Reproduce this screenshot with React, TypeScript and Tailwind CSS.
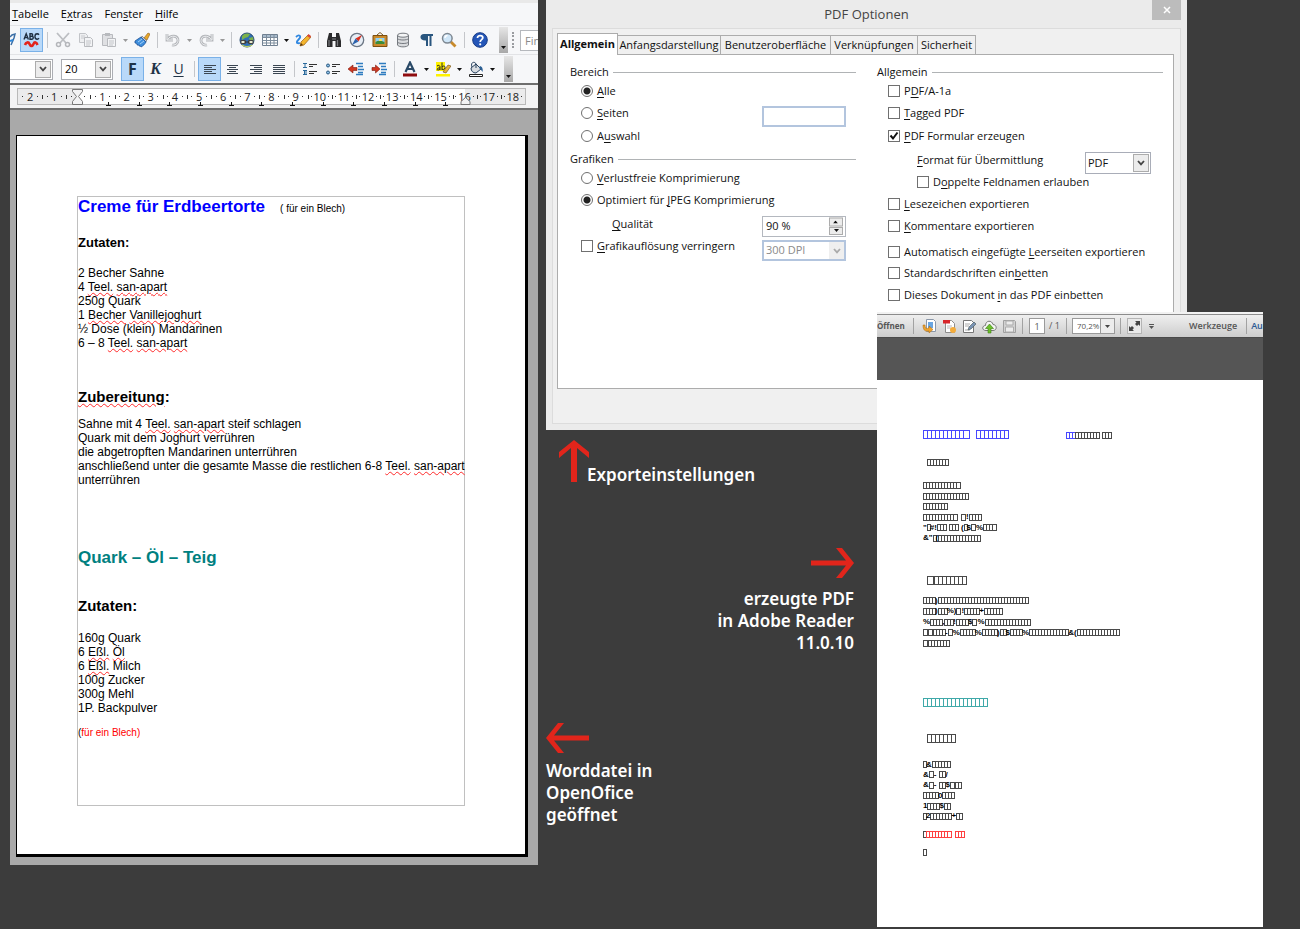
import type { ReactNode } from "react";
import clsx from "clsx";

/* ---------- shared bits ---------- */

// U marks the access key letter
function U({ children }: { children: ReactNode }) {
  return <span className="underline underline-offset-2">{children}</span>;
}

function Spell({ children }: { children: ReactNode }) {
  return (
    <span className="underline decoration-[#ff2a2a] decoration-wavy decoration-1 underline-offset-1">
      {children}
    </span>
  );
}

function Chevron({ color = "#444" }: { color?: string }) {
  return (
    <svg width="8" height="6" viewBox="0 0 8 6" fill="none" stroke={color} strokeWidth="1.800">
      <path d="M1 1l3 3.400L7 1" />
    </svg>
  );
}

function Caret({ color = "#111" }: { color?: string }) {
  return (
    <svg width="5" height="3" viewBox="0 0 5 3" fill={color}>
      <path d="M0 0h5L2.500 3z" />
    </svg>
  );
}

/* ---------- writer window ---------- */

function Sep() {
  return (
    <span className="flex w-2 shrink-0 justify-center">
      <span className="h-4 w-px bg-[#c4c6ca]" />
    </span>
  );
}

function Tool({ label, active, children }: { label: string; active?: boolean; children: ReactNode }) {
  return (
    <button
      type="button"
      aria-label={label}
      className={clsx(
        "flex h-6 w-[23px] shrink-0 items-center justify-center border",
        active ? "border-[#7ab1e8] bg-[#b9d9f9]" : "border-transparent",
      )}
    >
      {children}
    </button>
  );
}

function Drop({ label, muted }: { label: string; muted?: boolean }) {
  return (
    <button type="button" aria-label={label} className="flex h-6 w-2.5 shrink-0 items-center justify-center">
      <Caret color={muted ? "#999" : "#111"} />
    </button>
  );
}

function Overflow({ label }: { label: string }) {
  return (
    <button
      type="button"
      aria-label={label}
      className="flex h-[26px] w-[9px] shrink-0 items-end justify-center bg-linear-to-b from-[#e6e6e6] to-[#a8a8a8] pb-1"
    >
      <Caret />
    </button>
  );
}

function Icon({ children }: { children: ReactNode }) {
  return (
    <svg width="16" height="16" viewBox="0 0 16 16" fill="none" className="shrink-0">
      {children}
    </svg>
  );
}

function AlignIcon({ d }: { d: string }) {
  return (
    <Icon>
      <path d={d} stroke="#3b4652" strokeWidth="1" />
    </Icon>
  );
}

function StandardBar() {
  return (
    <div className="flex h-[29px] items-center overflow-hidden border-t border-[#e2e3e6]">
      <span className="w-2.5 shrink-0">
        <svg width="6" height="16" viewBox="0 0 6 16" fill="none">
          <path d="M0 5l2-2 3-1-1 4-3 7" stroke="#3b6ea5" strokeWidth="1.500" />
          <path d="M0 9l3-1" stroke="#2b85d8" strokeWidth="2" />
        </svg>
      </span>
      <Tool label="Automatische Rechtschreibprüfung" active>
        <svg width="17" height="16" viewBox="0 0 17 16" fill="none">
          <g stroke="#1f2f42" strokeWidth="1.400">
            <path d="M1 7.500L3.200 1.800 5.400 7.500M2 5.600h2.600" />
            <path d="M7 1.800v5.400h1.800a1.500 1.500 0 000-3H7h1.500a1.200 1.200 0 000-2.400z" />
            <path d="M16 2.700a2.400 2.400 0 00-1.800-.9c-3 0-3 5.400 0 5.400.8 0 1.400-.4 1.800-.9" />
          </g>
          <path d="M2 13c1-3 3.500-3.500 4.500-1s3 2.500 4 0 3-2 4 1" stroke="#e3231b" strokeWidth="2.600" />
        </svg>
      </Tool>
      <Sep />
      <Tool label="Ausschneiden">
        <Icon>
          <path d="M2 1l9 10M14 1L5 11" stroke="#bcbec2" strokeWidth="1.800" />
          <circle cx="3.500" cy="12.500" r="2" stroke="#b4b6ba" strokeWidth="1.500" />
          <circle cx="12.500" cy="12.500" r="2" stroke="#b4b6ba" strokeWidth="1.500" />
        </Icon>
      </Tool>
      <Tool label="Kopieren">
        <Icon>
          <path d="M1.500 1.500h6l2 2v7h-8z" fill="#eeeff1" stroke="#c2c4c8" />
          <path d="M3 4h4M3 6h4" stroke="#c8cace" />
          <path d="M6.500 5.500h6l2 2v7h-8z" fill="#f3f4f6" stroke="#b8babe" />
          <path d="M8 9h5M8 11h5M8 13h4" stroke="#c2c4c8" />
        </Icon>
      </Tool>
      <Tool label="Einfügen">
        <Icon>
          <path d="M1.500 2.500h10v11h-10z" fill="#dfe0e3" stroke="#b8babe" />
          <path d="M4 1h5v3H4z" fill="#b8babe" />
          <path d="M6.500 6.500h8v8h-8z" fill="#f3f4f6" stroke="#b8babe" />
          <path d="M8 9h5M8 11h5M8 13h4" stroke="#c2c4c8" />
        </Icon>
      </Tool>
      <Drop label="Einfügen Optionen" muted />
      <Tool label="Format übertragen">
        <Icon>
          <path d="M10 6l4-5 2 1-3 6z" fill="#e9a92c" stroke="#8b5a16" strokeWidth=".6" />
          <path d="M8 4l5 5-2 1-4-4z" fill="#c9ced6" stroke="#5a6470" strokeWidth=".6" />
          <path d="M1 9c2-1 4-3 6-4l5 5c-1 2-3 4-5 5-1-1 0-1-2-1 0-1 0-1-2-1 0-1 0-2-2-2z" fill="#3f8fdd" stroke="#1c4f94" strokeWidth=".8" />
          <path d="M4 10l4-3M6 12l4-3" stroke="#a6d0f7" />
        </Icon>
      </Tool>
      <Sep />
      <Tool label="Rückgängig">
        <Icon>
          <path d="M2 2v6h6M2.500 7.500C6 2.500 13 3.500 13 8.500c0 3.500-3.500 5-6 4.500" stroke="#b4b6ba" strokeWidth="2.800" />
          <path d="M2 2v6h6M2.500 7.500C6 2.500 13 3.500 13 8.500c0 3.500-3.500 5-6 4.500" stroke="#eceef0" strokeWidth="1" />
        </Icon>
      </Tool>
      <Drop label="Rückgängig Liste" muted />
      <Tool label="Wiederherstellen">
        <Icon>
          <path d="M14 2v6H8M13.500 7.500C10 2.500 3 3.500 3 8.500c0 3.500 3.500 5 6 4.500" stroke="#b4b6ba" strokeWidth="2.800" />
          <path d="M14 2v6H8M13.500 7.500C10 2.500 3 3.500 3 8.500c0 3.500 3.500 5 6 4.500" stroke="#eceef0" strokeWidth="1" />
        </Icon>
      </Tool>
      <Drop label="Wiederherstellen Liste" muted />
      <Sep />
      <Tool label="Hyperlink">
        <Icon>
          <circle cx="8" cy="8" r="7" fill="#2f6fb5" stroke="#274a70" />
          <path d="M3 4c2-3 6-3 8-2l-2 3-3 1-3 2zM10 6l4-1 .5 4-3 1z" fill="#7cb24a" />
          <path d="M2 8.500h4.500v3H2zM9.500 8.500H14v3H9.500z" fill="#e8ead0" stroke="#444" />
          <path d="M5 10h6" stroke="#333" />
          <path d="M3 13c3 2 7 2 10 0" stroke="#bcd06a" strokeWidth="1.500" />
        </Icon>
      </Tool>
      <Tool label="Tabelle">
        <Icon>
          <path d="M.5 2.500h15v11H.5z" fill="#fff" stroke="#6f7f90" />
          <path d="M1 3h14v2H1z" fill="#a9bccd" />
          <path d="M.5 5.500h15M.5 8.500h15M.5 11h15M4.500 2.500v11M8.500 2.500v11M12 2.500v11" stroke="#7c8c9c" />
        </Icon>
      </Tool>
      <Drop label="Tabelle Größe" />
      <Tool label="Zeichenfunktionen">
        <Icon>
          <path d="M1 5c3-3 6-1 3 2s-3 5 1 4" stroke="#2f87e0" strokeWidth="1.800" />
          <path d="M5 14l1-4 7-7 3 2-7 8z" fill="#f3b52e" stroke="#9b5f12" strokeWidth=".7" />
          <path d="M12 4l1.500-2L16 4l-1 2z" fill="#d8463a" />
          <path d="M5 14l1-3 2 2z" fill="#5a3a12" />
        </Icon>
      </Tool>
      <Sep />
      <Tool label="Suchen und Ersetzen">
        <Icon>
          <path d="M3 1h3v4h4V1h3l2 8v6H9.500V9h-3v6H1V9z" fill="#2b2b2d" />
          <path d="M3 8v6M11.500 8v6" stroke="#77797d" strokeWidth="1.200" />
          <path d="M6 6h4v2H6z" fill="#55575b" />
        </Icon>
      </Tool>
      <Tool label="Navigator">
        <Icon>
          <circle cx="8" cy="8" r="6.700" fill="#e7eef6" stroke="#6b7684" strokeWidth="1.300" />
          <path d="M13 3L9.500 9.500l-3-3z" fill="#d9301f" />
          <path d="M3 13l3.500-6.500 3 3z" fill="#2b63ad" />
        </Icon>
      </Tool>
      <Tool label="Galerie">
        <Icon>
          <path d="M5 3l3-2.500L11 3" stroke="#7b5a23" />
          <path d="M1 3.500h14v11H1z" fill="#c98a2b" stroke="#7d4f10" />
          <path d="M3.500 6h9v6h-9z" fill="#8ed0f5" />
          <path d="M3.500 10c3-2 6-1 9 0v2h-9z" fill="#3d8b37" />
          <path d="M7 7h3v2H7z" fill="#f6e36a" />
        </Icon>
      </Tool>
      <Tool label="Datenquellen">
        <Icon>
          <path d="M2.500 3v10c1 2.500 10 2.500 11 0V3" fill="#d9dbde" stroke="#75797f" />
          <ellipse cx="8" cy="3.200" rx="5.500" ry="2" fill="#f4f5f6" stroke="#75797f" />
          <path d="M2.500 6.500c1 2 10 2 11 0M2.500 10c1 2 10 2 11 0" stroke="#75797f" />
        </Icon>
      </Tool>
      <Tool label="Steuerzeichen">
        <Icon>
          <path d="M8 8.500C1 9 1 2 6 2h9v2h-1.500v10h-2V4H10v10H8z" fill="#29567f" />
        </Icon>
      </Tool>
      <Tool label="Maßstab">
        <Icon>
          <path d="M9.500 9.500l5 5" stroke="#c78a2c" strokeWidth="2.800" />
          <circle cx="6.300" cy="6.300" r="4.800" fill="#cfe6f8" stroke="#7d8791" strokeWidth="1.500" />
          <path d="M4 6c0-1.500 1-2.500 2.500-2.500" stroke="#fff" strokeWidth="1.300" />
        </Icon>
      </Tool>
      <Sep />
      <Tool label="Hilfe">
        <Icon>
          <circle cx="8" cy="8" r="7.300" fill="#2456b8" stroke="#163a86" />
          <path d="M5.500 6c0-3.500 5.300-3 5.300-.2C10.800 7.800 8.200 7.500 8.200 10" stroke="#fff" strokeWidth="1.800" />
          <circle cx="8.200" cy="12.300" r="1.100" fill="#fff" />
        </Icon>
      </Tool>
      <span className="w-2 shrink-0" />
      <Overflow label="Weitere Symbole Standard" />
      <span className="mx-1 h-4 shrink-0 border-l-2 border-dotted border-[#9a9ca0]" />
      <input
        aria-label="Suchtext"
        placeholder="Find"
        className="ml-0.5 h-[21px] w-[60px] shrink-0 border border-[#b5b8bd] bg-white pl-1 text-[11px] placeholder:text-[#8a8a8a]"
      />
    </div>
  );
}

function Combo({ label, value, className }: { label: string; value: string; className: string }) {
  return (
    <label className={clsx("relative flex h-[21px] shrink-0 border border-[#abadb3] bg-white", className)}>
      <select aria-label={label} className="w-full appearance-none bg-transparent pl-[3px] text-[11px] outline-none">
        <option>{value}</option>
      </select>
      <span className="pointer-events-none absolute inset-y-px right-px flex w-4 items-center justify-center border border-[#acacac] bg-[#ececec]">
        <Chevron />
      </span>
    </label>
  );
}

function FormatBar() {
  return (
    <div className="flex h-[29px] items-center overflow-hidden border-t border-[#e2e3e6]">
      <Combo label="Schriftname" value="" className="w-[43px] border-l-0" />
      <Combo label="Schriftgröße" value="20" className="mx-2 w-[52px]" />
      <Tool label="Fett" active>
        <b className="font-['Open_Sans'] text-base leading-none text-[#1f3347]">F</b>
      </Tool>
      <Tool label="Kursiv">
        <b className="font-['Liberation_Serif'] text-base leading-none text-[#1f3347] italic">K</b>
      </Tool>
      <Tool label="Unterstrichen">
        <span className="font-['Open_Sans'] text-sm leading-none text-[#1f3347] underline underline-offset-2">U</span>
      </Tool>
      <Sep />
      <Tool label="Linksbündig" active>
        <AlignIcon d="M2 4.500h12M2 6.500h8M2 8.500h12M2 10.500h8M2 12.500h12" />
      </Tool>
      <Tool label="Zentriert">
        <AlignIcon d="M2 4.500h11M4 6.500h7M2 8.500h11M4 10.500h7M2 12.500h11" />
      </Tool>
      <Tool label="Rechtsbündig">
        <AlignIcon d="M2 4.500h12M6 6.500h8M2 8.500h12M6 10.500h8M2 12.500h12" />
      </Tool>
      <Tool label="Blocksatz">
        <AlignIcon d="M2 4.500h12M2 6.500h12M2 8.500h12M2 10.500h12M2 12.500h12" />
      </Tool>
      <Sep />
      <Tool label="Nummerierung">
        <Icon>
          <path d="M1 2.500h4M3 2.500v4M1 6.500h4M1 9.500h4M2.500 9.500v4M4 9.500v4M1 13.500h4" stroke="#2b6a9c" />
          <path d="M7 3.500h8M7 5.500h4M7 10.500h8M7 12.500h5" stroke="#333" />
        </Icon>
      </Tool>
      <Tool label="Aufzählung">
        <Icon>
          <circle cx="3" cy="4.500" r="1.500" fill="#8cc0e8" stroke="#27577f" />
          <circle cx="3" cy="11.500" r="1.500" fill="#8cc0e8" stroke="#27577f" />
          <path d="M7 3.500h8M7 5.500h4M7 10.500h8M7 12.500h5" stroke="#333" />
        </Icon>
      </Tool>
      <Tool label="Einzug vermindern">
        <Icon>
          <path d="M8 2.500h7M10 5.500h5M10 8.500h6M10 11.500h5M8 13.500h7" stroke="#2e7cc0" strokeWidth="1.300" />
          <path d="M0 8l5-4v2.500h4v3H5V12z" fill="#d1361f" stroke="#7c1d10" strokeWidth=".6" />
        </Icon>
      </Tool>
      <Tool label="Einzug erhöhen">
        <Icon>
          <path d="M8 2.500h7M10 5.500h5M10 8.500h6M10 11.500h5M8 13.500h7" stroke="#2e7cc0" strokeWidth="1.300" />
          <path d="M9 8L4.500 4v2.500H1v3h3.500V12z" fill="#d1361f" stroke="#7c1d10" strokeWidth=".6" />
        </Icon>
      </Tool>
      <Sep />
      <Tool label="Schriftfarbe">
        <Icon>
          <path d="M3.500 11L8 1.500 12.500 11M5 8h6" stroke="#2a4a68" strokeWidth="2.200" />
          <path d="M1 12.500h14v3H1z" fill="#8f0d10" />
        </Icon>
      </Tool>
      <Drop label="Schriftfarbe wählen" />
      <Tool label="Zeichenhintergrund">
        <Icon>
          <path d="M1 1h9v9H1z" fill="#fff200" />
          <path d="M2 5c2-1.500 3 0 3 1v3M5 7c-3-.5-3.500 2-2 2s2-1 2-1M7 1.500V9M7 6c2-2 3.500-.5 3 1s-2 2-3 1" stroke="#222" />
          <path d="M8 11l5-7 3 1-5 7z" fill="#e6b23a" stroke="#6c4a10" strokeWidth=".6" />
          <path d="M1 13h14v2.500H1z" fill="#fff200" />
        </Icon>
      </Tool>
      <Drop label="Zeichenhintergrund wählen" />
      <Tool label="Hintergrundfarbe">
        <Icon>
          <path d="M3 7l5-4 5 5-5 4c-3 0-5-2-5-5z" fill="#d7dbe0" stroke="#27405c" />
          <path d="M4 6c-2-5 3-6 4-3v4" stroke="#27405c" />
          <path d="M12 5c3 1 3 4 2.500 6-1-1-1.500-3-3.500-4z" fill="#2b5f94" />
          <path d="M1.500 13.500h13v2h-13z" fill="#fff" stroke="#222" />
        </Icon>
      </Tool>
      <Drop label="Hintergrundfarbe wählen" />
      <span className="w-[7px] shrink-0" />
      <Overflow label="Weitere Symbole Format" />
    </div>
  );
}

const rulerLabels = ["2", "1", "", ...Array.from({ length: 18 }, (_, i) => String(i + 1))];

function Ruler() {
  return (
    <div className="h-[25px] border-b-2 border-[#6e6e6e] bg-[#f3f3f4] px-[7px] pt-[3px]">
      <div className="relative w-[509px] border border-[#b9b9b9] bg-[linear-gradient(to_right,#ebebec_59px,#fff_59px,#fff_447px,#ebebec_447px)]">
        <div className="flex h-[15px] text-[11px] leading-none text-[#222]">
          {rulerLabels.map((label, i) => (
            <span key={i} className="flex min-w-0 flex-1 items-center justify-between">
              <i className={clsx("h-1 w-px", i > 0 && "bg-[#333]")} />
              <i className="size-px bg-[#333]" />
              <span className="min-w-1">{label}</span>
              <i className="size-px bg-[#333]" />
              <i className="w-px" />
            </span>
          ))}
        </div>
        {/* indent markers and tab stops */}
        <svg className="absolute top-0 left-[53px]" width="13" height="16" viewBox="0 0 13 16" fill="#f3f3f4" stroke="#777">
          <path d="M1.500 .5h10v2l-4 5 4 5v3h-10v-3l4-5-4-5z" />
        </svg>
        <svg className="absolute top-2 left-[442px]" width="11" height="8" viewBox="0 0 11 8" fill="#f3f3f4" stroke="#777">
          <path d="M1 7.500v-3L5.500 .5 10 4.500v3z" />
        </svg>
        <div className="absolute top-[13px] left-[75px] flex w-[368px]">
          {Array.from({ length: 12 }).map((_, i) => (
            <span key={i} className="flex flex-1 justify-center">
              <svg width="5" height="4" viewBox="0 0 5 4" stroke="#111">
                <path d="M2.500 0v4M0 3.500h5" />
              </svg>
            </span>
          ))}
        </div>
      </div>
    </div>
  );
}

function WriterWindow() {
  return (
    <section className="flex w-[528px] shrink-0 flex-col self-start bg-[#f6f7f9] font-['Open_Sans',sans-serif] text-black">
      <div className="h-[3px] bg-[#e9e9e9]" />
      <nav className="flex h-[22px] items-center gap-3 pl-0.5 text-[11px]">
        <button type="button"><U>T</U>abelle</button>
        <button type="button">E<U>x</U>tras</button>
        <button type="button">Fen<U>s</U>ter</button>
        <button type="button"><U>H</U>ilfe</button>
      </nav>
      <StandardBar />
      <FormatBar />
      <div className="h-0.5 bg-[#6e6e6e]" />
      <Ruler />
      <div className="bg-[#a9a9a9] pt-[25px] pr-[10px] pb-2 pl-[6px]">
        <article className="border border-r-[3px] border-b-[3px] border-black bg-white px-[60px] pt-[60px] pb-12">
          <div className="h-[610px] border border-[#c0c0c0] font-['Liberation_Sans',sans-serif] text-xs leading-[14px] whitespace-nowrap">
            <h1 className="mt-px text-[17px] leading-[18px] font-bold text-[#0000ff]">
              Creme für Erdbeertorte
              <span className="ml-[15px] text-[10px] font-normal text-black">( für ein Blech)</span>
            </h1>
            <h2 className="mt-4 text-[13px] leading-[18px] font-bold">Zutaten:</h2>
            <p className="mt-[14px]">
              2 Becher Sahne<br />
              4 <Spell>Teel.</Spell> <Spell>san-apart</Spell><br />
              250g Quark<br />
              1 <Spell>Becher</Spell> <Spell>Vanillejoghurt</Spell><br />
              ½ Dose (klein) Mandarinen<br />
              6 – 8 <Spell>Teel.</Spell> <Spell>san-apart</Spell>
            </p>
            <h2 className="mt-[38px] text-[15px] leading-[18px] font-bold"><Spell>Zubereitung</Spell>:</h2>
            <p className="mt-[11px]">
              Sahne mit 4 <Spell>Teel.</Spell> <Spell>san-apart</Spell> steif schlagen<br />
              Quark mit dem Joghurt verrühren<br />
              die abgetropften Mandarinen unterrühren<br />
              anschließend unter die gesamte Masse die restlichen 6-8 <Spell>Teel.</Spell> <Spell>san-apart</Spell><br />
              unterrühren
            </p>
            <h1 className="mt-[62px] text-[17px] leading-[18px] font-bold text-[#008080]">Quark – Öl – Teig</h1>
            <h2 className="mt-[30px] text-[15px] leading-[18px] font-bold">Zutaten:</h2>
            <p className="mt-4">
              160g Quark<br />
              6 <Spell>Eßl.</Spell> <Spell>Öl</Spell><br />
              6 <Spell>Eßl.</Spell> Milch<br />
              100g Zucker<br />
              300g Mehl<br />
              1P. Backpulver
            </p>
            <p className="mt-[11px] text-[10px] text-[#ff0000]"><span className="text-black">(</span>für ein Blech)</p>
          </div>
        </article>
      </div>
    </section>
  );
}

/* ---------- PDF options dialog ---------- */

const rowClass = "flex h-[18px] items-center";

function Legend({ className, children }: { className?: string; children: ReactNode }) {
  return (
    <h3 className={clsx(rowClass, "gap-1", className)}>
      {children}
      <span className="h-px flex-1 bg-[#b0b3b5]" />
    </h3>
  );
}

function Radio({ name, checked, className, children }: { name: string; checked?: boolean; className?: string; children: ReactNode }) {
  return (
    <label className={clsx(rowClass, "gap-1 pl-[11px]", className)}>
      <input
        type="radio"
        name={name}
        defaultChecked={checked}
        className="size-3 appearance-none rounded-full border border-[#707070] bg-white checked:bg-[radial-gradient(circle,#222_3px,#fff_4px)]"
      />
      <span>{children}</span>
    </label>
  );
}

function Check({ checked, className, children }: { checked?: boolean; className?: string; children: ReactNode }) {
  return (
    <label className={clsx(rowClass, "gap-1 pl-[11px]", className)}>
      <span className="relative flex size-3">
        <input type="checkbox" defaultChecked={checked} className="peer size-3 appearance-none border border-[#707070] bg-white" />
        <svg viewBox="0 0 12 12" className="pointer-events-none absolute inset-0 hidden size-3 peer-checked:block" fill="none" stroke="#111" strokeWidth="2">
          <path d="M2.500 5.500l2.500 3 4.500-6" />
        </svg>
      </span>
      <span>{children}</span>
    </label>
  );
}

const tabs = [
  { name: "Anfangsdarstellung", width: "w-[103px]" },
  { name: "Benutzeroberfläche", width: "w-[110px]" },
  { name: "Verknüpfungen", width: "w-[87px]" },
  { name: "Sicherheit", width: "w-[58px]" },
];

function PdfOptions() {
  return (
    <section className="col-span-2 col-start-1 row-span-2 row-start-1 flex flex-col bg-[#ebebeb] px-1.5 pb-1.5 font-['Open_Sans',sans-serif] text-[11px] text-[#111]">
      <header className="relative flex h-7 items-center justify-center pt-px text-[13px] text-[#444]">
        PDF Optionen
        <button type="button" aria-label="Schließen" className="absolute top-0 right-0 flex h-5 w-[29px] items-center justify-center bg-[#bcbcbc]">
          <svg width="8" height="8" viewBox="0 0 8 8" stroke="#fff" strokeWidth="1.500">
            <path d="M1 1l6 6M7 1L1 7" />
          </svg>
        </button>
      </header>
      <div className="flex flex-1 flex-col border border-[#dcdcdc] bg-[#f0f0f0] pt-1 pr-1.5 pl-1">
        <div role="tablist" className="flex items-end">
          <button type="button" role="tab" aria-selected className="z-10 -mb-px h-[22px] w-[61px] border border-b-0 border-[#acacac] bg-white font-bold">
            Allgemein
          </button>
          {tabs.map((tab) => (
            <button key={tab.name} type="button" role="tab" className={clsx("h-[19px] border border-b-0 border-l-0 border-[#acacac] bg-[#f0f0f0]", tab.width)}>
              {tab.name}
            </button>
          ))}
        </div>
        <div className="grid h-[335px] grid-cols-[286px_286px] gap-x-[21px] border border-[#acacac] bg-white pt-2 pl-3">
          <div>
            <Legend>Bereich</Legend>
            <Radio name="bereich" checked className="mt-px"><U>A</U>lle</Radio>
            <div className={clsx(rowClass, "mt-1 justify-between pr-2.5")}>
              <Radio name="bereich"><U>S</U>eiten</Radio>
              <input aria-label="Seitenbereich" className="mt-0.5 h-[21px] w-[84px] self-start border-2 border-[#b3c5de] bg-white" />
            </div>
            <Radio name="bereich" className="mt-[5px]">A<U>u</U>swahl</Radio>
            <Legend className="mt-[5px]">Grafiken</Legend>
            <Radio name="grafik" className="mt-px"><U>V</U>erlustfreie Komprimierung</Radio>
            <Radio name="grafik" checked className="mt-1">Optimiert für <U>J</U>PEG Komprimierung</Radio>
            <div className={clsx(rowClass, "mt-1.5 justify-between pr-2.5 pl-[42px]")}>
              <label htmlFor="quality"><U>Q</U>ualität</label>
              <span className="mt-px flex h-[21px] w-[84px] self-start border border-[#b4b8bf] bg-white">
                <input id="quality" defaultValue="90 %" className="w-0 flex-1 pl-[3px] outline-none" />
                <span className="my-px mr-0.5 flex w-3.5 flex-col">
                  <button type="button" aria-label="Erhöhen" className="flex flex-1 rotate-180 items-center justify-center border border-[#acacac] bg-[#ececec]">
                    <Caret />
                  </button>
                  <button type="button" aria-label="Verringern" className="flex flex-1 items-center justify-center border border-[#acacac] bg-[#ececec]">
                    <Caret />
                  </button>
                </span>
              </span>
            </div>
            <div className={clsx(rowClass, "mt-1 justify-between pr-2.5")}>
              <Check><U>G</U>rafikauflösung verringern</Check>
              <label className="relative mt-[3px] flex h-[21px] w-[84px] self-start border-2 border-[#b3c5de] bg-white">
                <select disabled aria-label="Auflösung" className="w-full appearance-none pl-0.5 text-[#8a8a8a] opacity-100">
                  <option>300 DPI</option>
                </select>
                <span className="pointer-events-none absolute inset-y-0 right-0 flex w-[15px] items-center justify-center bg-[#efefef]">
                  <Chevron color="#aaa" />
                </span>
              </label>
            </div>
          </div>
          <div>
            <Legend>Allgemein</Legend>
            <Check className="mt-px">P<U>D</U>F/A-1a</Check>
            <Check className="mt-1"><U>T</U>agged PDF</Check>
            <Check checked className="mt-[5px]"><U>P</U>DF Formular erzeugen</Check>
            <div className={clsx(rowClass, "mt-1.5 justify-between pr-3 pl-10")}>
              <label htmlFor="format"><U>F</U>ormat für Übermittlung</label>
              <span className="relative mt-px flex h-[22px] w-[66px] self-start border border-[#a9adb8] bg-white">
                <select id="format" className="w-full appearance-none pl-0.5 outline-none">
                  <option>PDF</option>
                </select>
                <span className="pointer-events-none absolute inset-y-px right-px flex w-4 items-center justify-center border border-[#acacac] bg-[#ececec]">
                  <Chevron />
                </span>
              </span>
            </div>
            <Check className="mt-1 ml-[29px]">D<U>o</U>ppelte Feldnamen erlauben</Check>
            <Check className="mt-1"><U>L</U>esezeichen exportieren</Check>
            <Check className="mt-1"><U>K</U>ommentare exportieren</Check>
            <Check className="mt-2">Automatisch eingefügte <U>L</U>eerseiten exportieren</Check>
            <Check className="mt-[3px]">Standardschriften ein<U>b</U>etten</Check>
            <Check className="mt-1">Dieses Dokument <U>i</U>n das PDF einbetten</Check>
          </div>
        </div>
      </div>
    </section>
  );
}

/* ---------- reader window ---------- */

// Broken glyphs: "o" is a narrow box, "O" a wide one, anything else is printed
function Tofu({ text, big, className = "text-[#4a4a4a]" }: { text: string; big?: boolean; className?: string }) {
  return (
    <span className={clsx("flex items-center", big ? "h-2.5" : "h-[7px]", className)}>
      {text.split("").map((c, i) => {
        if (c === "o") return <i key={i} className={clsx("-mr-px border border-current", big ? "h-[9px] w-[5px]" : "h-[7px] w-1")} />;
        if (c === "O") return <i key={i} className={clsx("border border-current", big ? "h-[9px] w-[7px]" : "h-[7px] w-[5px]")} />;
        if (c === " ") return <i key={i} className="w-[3px]" />;
        return <b key={i} className="z-10 leading-none text-black">{c}</b>;
      })}
    </span>
  );
}

function TofuBlock({ lines, className }: { lines: string[]; className: string }) {
  return (
    <div className={clsx("flex flex-col justify-between", className)}>
      {lines.map((line, i) => (
        <Tofu key={i} text={line} />
      ))}
    </div>
  );
}

function ReaderSep() {
  return <span className="h-4 w-px shrink-0 bg-[#a2a2a2]" />;
}

function ReaderTool({ label, children }: { label: string; children: ReactNode }) {
  return (
    <button type="button" aria-label={label} className="flex w-5 shrink-0 justify-center">
      <svg width="15" height="15" viewBox="0 0 15 15" fill="none">{children}</svg>
    </button>
  );
}

function ReaderWindow() {
  return (
    <section className="z-10 col-span-2 col-start-2 row-span-2 row-start-2 flex min-w-0 flex-col bg-white">
      <div className="h-[3px] border-b border-[#8c8c8c] bg-[#f2f2f2]" />
      <div className="flex h-[22px] items-center overflow-hidden bg-linear-to-b from-[#efefef] to-[#cdcdcd] font-['Open_Sans',sans-serif] text-[9px] text-[#555]">
        <button type="button" className="w-9 shrink-0 text-left text-[8px] font-bold">Öffnen</button>
        <ReaderSep />
        <span className="w-[5px] shrink-0" />
        <ReaderTool label="PDF erstellen">
          <path d="M4.500 .5h7l2 2v10h-9z" fill="#fff" stroke="#8a97a8" />
          <path d="M6 3h5v6H6z" fill="#6aa5e0" />
          <path d="M1 6c0 5 2 7 6 6v2l4-3.500L7 7v2C4 10 3 9 3 6z" fill="#eda22c" stroke="#a8660c" strokeWidth=".5" />
        </ReaderTool>
        <ReaderTool label="In PDF konvertieren">
          <path d="M3.500 1.500h6l3 3v9h-9z" fill="#fff" stroke="#8d8d8d" />
          <path d="M1 1h7v3.500H1z" fill="#d8262a" />
          <path d="M5 7h5M5 9h4" stroke="#bbb" />
          <circle cx="11" cy="11" r="3" fill="#f3ac3c" />
        </ReaderTool>
        <ReaderTool label="Signieren">
          <path d="M1.500 1.500h8l2 2v10h-10z" fill="#fff" stroke="#777" />
          <path d="M3 5h5M3 7h4M3 11h5" stroke="#aaa" />
          <path d="M6 11l1-3 5-5 2 2-5 5z" fill="#7a93b4" stroke="#455" strokeWidth=".6" />
        </ReaderTool>
        <ReaderTool label="Hochladen">
          <path d="M4 11.500C-.5 11.500 0 6.500 3.500 6.500 3.500 1 10 1 11 5.500c4 0 4.500 6 0 6z" fill="#f5f5f5" stroke="#777" />
          <path d="M7.500 5l4 4.500H9V14H6V9.500H3.500z" fill="#6cbf2c" stroke="#3d7f12" strokeWidth=".6" />
        </ReaderTool>
        <ReaderTool label="Speichern">
          <path d="M1.500 1.500h11l1 1v11h-12z" fill="#d2d2d2" stroke="#a0a0a0" />
          <path d="M4 2h7v4H4zM3.500 8h8v5h-8z" fill="#ececec" stroke="#acacac" />
        </ReaderTool>
        <span className="w-[3px] shrink-0" />
        <ReaderSep />
        <input aria-label="Seite" defaultValue="1" className="ml-[6px] h-4 w-4 shrink-0 border border-[#9a9a9a] bg-white text-center" />
        <span className="ml-1 w-[17px] shrink-0">/ 1</span>
        <ReaderSep />
        <span className="relative mx-[5px] flex h-4 w-[43px] shrink-0 border border-[#9a9a9a] bg-white">
          <select aria-label="Zoom" className="w-full appearance-none pl-1 text-[8px]">
            <option>70,2%</option>
          </select>
          <span className="pointer-events-none absolute inset-y-0 right-0 flex w-3.5 items-center justify-center border-l border-[#9a9a9a] bg-[#ececec]">
            <Caret color="#444" />
          </span>
        </span>
        <ReaderSep />
        <button type="button" aria-label="Vollbild" className="ml-1.5 shrink-0 border border-[#b5b5b5] bg-[#e9e9e9]">
          <svg width="13" height="14" viewBox="0 0 13 14" fill="#444">
            <path d="M12 2v5l-1.500-1.500L9 7 7 5l1.500-1.500L7 2zM1 12V7l1.500 1.500L4 7l2 2-1.500 1.500L6 12z" />
          </svg>
        </button>
        <button type="button" aria-label="Mehr" className="ml-[7px] flex shrink-0 flex-col items-center gap-px">
          <span className="h-px w-[5px] bg-[#555]" />
          <Caret color="#555" />
        </button>
        <button type="button" className="ml-[35px] shrink-0 font-semibold">Werkzeuge</button>
        <span className="w-[9px] shrink-0" />
        <ReaderSep />
        <button type="button" className="ml-1 shrink-0 font-semibold text-[#2c5a94]">Au</button>
      </div>
      <div className="h-[43px] border-t border-[#4a4a4a] bg-[#555]" />
      <div className="flex-1 pt-[49px] pl-[46px] font-['Liberation_Sans',sans-serif] text-[8px] text-black">
        <div className="flex items-end gap-[58px]">
          <Tofu big text="ooooooooooO  oooooooo" className="text-[#4848ff]" />
          <span className="flex">
            <Tofu text="ooo" className="text-[#4848ff]" />
            <Tofu text="oooooooo ooo" />
          </span>
        </div>
        <Tofu text="ooooooo" className="mt-5 ml-1 text-[#4a4a4a]" />
        <TofuBlock
          className="mt-4 h-[60px]"
          lines={["oooooooooooO", "ooooooooooooooo", "oooooooo", "ooooooooooO O!oooo", '"o#!ooo ooo (o$O%oooO', '&"o(oooooooooooooo']}
        />
        <Tofu big text="Ooooooooo" className="mt-[33px] ml-1 text-[#4a4a4a]" />
        <TofuBlock
          className="mt-3 h-[50px]"
          lines={[
            "oooo)oooooooooooooooooooooooooooooo",
            "oooo)ooo%)O!ooooo+oooooo",
            "%oooo,ooo!oooo$O%ooooooooooooooo",
            "OOoooo-O%ooooo%ooooo)oo$oooo%ooooooooooooo&(oooooooooooooo",
            "Oooooooo",
          ]}
        />
        <Tofu big text="oooooooooooooooo" className="mt-[50px] text-[#3fa9a9]" />
        <Tofu big text="ooooooo" className="mt-[26px] ml-1 text-[#4a4a4a]" />
        <TofuBlock
          className="mt-[18px] h-[59px]"
          lines={["o&oooooo", "&O- oo/", "&O- oo$Ooo", "ooooo0oooo", "1oooo$oo", "o2ooooooo+oo"]}
        />
        <span className="mt-[11px] flex">
          <Tofu text="o" />
          <Tofu text="oooooooO ooo" className="text-[#ff4040]" />
        </span>
        <Tofu text="o" className="mt-[11px] text-[#4a4a4a]" />
      </div>
    </section>
  );
}

/* ---------- annotations ---------- */

function Notes() {
  return (
    <aside className="col-start-1 row-start-3 pt-2.5 font-['Noto_Sans',sans-serif] text-[17px] leading-[22px] font-semibold text-white">
      <div className="flex items-end pl-[13px]">
        <svg width="30" height="42" viewBox="0 0 30 42" fill="#e1251b" className="mb-1">
          <path d="M15 0l15 12v6L18 8v34h-6V8L0 18v-6z" />
        </svg>
        <p className="-ml-0.5">Exporteinstellungen</p>
      </div>
      <div className="mt-[62px] flex flex-col items-end pr-[23px] text-right">
        <svg width="43" height="30" viewBox="0 0 43 30" fill="#e1251b">
          <path d="M43 15L31 30h-6l10-12.500H0v-5h35L25 0h6z" />
        </svg>
        <p className="mt-2.5">
          erzeugte PDF<br />
          in Adobe Reader<br />
          11.0.10
        </p>
      </div>
      <div className="mt-[69px]">
        <svg width="43" height="30" viewBox="0 0 43 30" fill="#e1251b">
          <path d="M0 15L12 0h6L8 12.500h35v5H8L18 30h-6z" />
        </svg>
        <p className="mt-[7px]">
          Worddatei in<br />
          OpenOfice<br />
          geöffnet
        </p>
      </div>
    </aside>
  );
}

export default function App() {
  return (
    <main className="flex min-h-screen gap-2 bg-[#3c3c3c] pb-0.5 pl-2.5">
      <WriterWindow />
      <div className="grid grid-cols-[331px_310px_76px] grid-rows-[312px_118px_1fr]">
        <PdfOptions />
        <ReaderWindow />
        <Notes />
      </div>
    </main>
  );
}
